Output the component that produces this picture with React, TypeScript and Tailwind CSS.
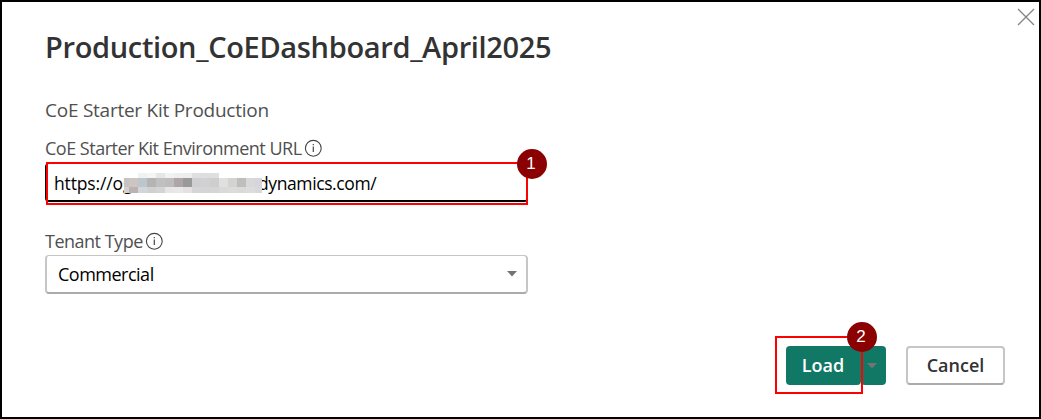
import type { ReactNode } from "react";

const ROW_TOP = ["", "", "#eff2f2", "#f5f5f2", "#e6e6e7", "#f1f2f5", "#eeedf2", "#ececf1", "#dfdfe1", "#dddee1", "#dfdfe1", "", "", "", "", ""];
const ROW_MID = ["#c6c1c2", "#cdc5bf", "#bdc7cb", "#b4b4b5", "#c0c0c1", "#bebcbc", "#aca7a6", "#999999", "#cfcfcf", "#d1d1d2", "#cdcfcf", "#e0e0df", "#d3d3d3", "#bebfbd", "#d8d8d9", "#d6d6da"];
const ROW_LOW = ["#d2cfd1", "#bdb1b1", "#d0d6db", "#d0d0d0", "#d4d4d4", "#e6e6e9", "#e8e8eb", "#e5e1e0", "#d5d5d7", "#d4d4d5", "#d5d5d5", "#d9d9d9", "#dcdcdb", "#dadada", "#dcdcdc", "#d8d8db"];

function Mosaic() {
  return (
    <div
      aria-hidden="true"
      className="absolute left-[78px] top-[9px] grid w-[138px] grid-cols-[5px_repeat(14,9px)_7px] grid-rows-[5px_9px_6px]"
    >
      {[...ROW_TOP, ...ROW_MID, ...ROW_LOW].map((color, i) => (
        <span key={i} style={{ backgroundColor: color || "#ffffff" }} />
      ))}
    </div>
  );
}

function InfoIcon() {
  return (
    <svg width="18" height="18" viewBox="0 0 18 18" fill="none" className="shrink-0">
      <circle cx="9.3" cy="9.3" r="7.9" stroke="#444444" strokeWidth="1.1" />
      <path d="M9.3 7.5V13" stroke="#444444" strokeWidth="1.2" />
      <path d="M9.3 5V6.3" stroke="#444444" strokeWidth="1.2" />
    </svg>
  );
}

function Label({ children, className }: { children: ReactNode; className: string }) {
  return (
    <span className={`whitespace-nowrap text-[18px] leading-6 tracking-[-0.5px] text-[#505050] ${className}`}>{children}</span>
  );
}

function Step({ n, className }: { n: number; className: string }) {
  return (
    <span
      className={`absolute flex size-[30px] items-center justify-center rounded-full bg-[#8b0000] pb-px pr-[2px] font-['Liberation_Sans',sans-serif] text-[17px] font-normal leading-none text-white ${className}`}
    >
      {n}
    </span>
  );
}

export default function App() {
  return (
    <div className="relative flex h-[419px] w-[1041px] flex-col border-2 border-black bg-white pl-[43px] font-['Open_Sans','Noto_Sans',sans-serif]">
      <button aria-label="Close" className="absolute right-[4px] top-[6px]">
        <svg width="18" height="18" viewBox="0 0 18 18" fill="none" className="block">
          <path d="M1 1L17 17M17 1L1 17" stroke="#858585" strokeWidth="1.3" />
        </svg>
      </button>

      <h1 className="mt-[25px] h-10 whitespace-nowrap text-[29px] font-semibold leading-10 tracking-[-0.34px] text-[#333333]">
        Production_CoEDashboard_April2025
      </h1>
      <p className="mt-[31px] h-6 whitespace-nowrap text-[19px] leading-6 tracking-[-0.25px] text-[#505050]">
        CoE Starter Kit Production
      </p>

      <div className="mt-[14px] flex h-6 items-center gap-[2px]">
        <Label className="w-[257px]">CoE Starter Kit Environment URL</Label>
        <InfoIcon />
      </div>
      <div className="relative mt-[3px] flex h-[39px] w-[483px] items-center rounded-[4px] border border-b-2 border-black pl-[8px] text-[17.5px] leading-6 text-black">
        <span className="w-[69px] whitespace-nowrap pt-[2px] tracking-[-0.15px]">https://o</span>
        <span className="w-[135px] whitespace-nowrap pt-[2px]">g</span>
        <span className="whitespace-nowrap pt-[2px] tracking-[-0.4px]">dynamics.com/</span>
        <Mosaic />
        <span className="absolute -left-px -top-[2px] ml-px h-[43px] w-[482px] border-2 border-[#ff0000]" />
        <Step n={1} className="left-[471px] top-[-15px]" />
      </div>

      <div className="mt-[27px] flex h-6 items-center gap-[2px]">
        <Label className="w-[98px]">Tenant Type</Label>
        <InfoIcon />
      </div>
      <div className="mt-[2px] flex h-[39px] w-[483px] items-center justify-between rounded-[4px] border-2 border-t border-[#c6c6c6] border-b-[#ababab] pl-[11px] pr-[9px] text-[18px] leading-6 text-black">
        <span className="tracking-[-0.5px]">Commercial</span>
        <svg width="10" height="6" viewBox="0 0 10 6" className="mb-px">
          <path d="M0 0H10L5 5.5Z" fill="#737373" />
        </svg>
      </div>

      <div className="mr-[34px] mt-[52px] flex h-[39px] justify-end gap-[20px] text-[18px] font-semibold">
        <div className="relative flex w-[100px]">
          <button className="flex w-[75px] items-center justify-center rounded-[4px] bg-[#117865] pr-px text-white">Load</button>
          <button aria-label="More load options" className="flex w-[25px] items-center justify-center rounded-[4px] bg-[#117865] pr-[4px]">
            <svg width="10" height="6" viewBox="0 0 10 6">
              <path d="M0 0H10L5 5.5Z" fill="#737373" />
            </svg>
          </button>
          <span className="absolute left-[-11px] top-[-10px] h-[58px] w-[88px] border-2 border-[#ff0000]" />
          <Step n={2} className="left-[61px] top-[-24px]" />
        </div>
        <button className="flex w-[99px] items-center justify-center rounded-[4px] border-2 border-[#c6c6c6] border-b-[#ababab] text-[#333333]">
          Cancel
        </button>
      </div>
    </div>
  );
}
